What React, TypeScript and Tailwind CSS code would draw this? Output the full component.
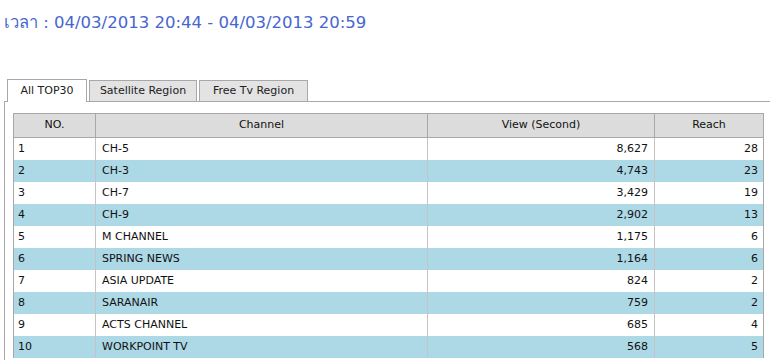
import React from "react";

const rows: [number, string, string, number][] = [
  [1, "CH-5", "8,627", 28],
  [2, "CH-3", "4,743", 23],
  [3, "CH-7", "3,429", 19],
  [4, "CH-9", "2,902", 13],
  [5, "M CHANNEL", "1,175", 6],
  [6, "SPRING NEWS", "1,164", 6],
  [7, "ASIA UPDATE", "824", 2],
  [8, "SARANAIR", "759", 2],
  [9, "ACTS CHANNEL", "685", 4],
  [10, "WORKPOINT TV", "568", 5],
];

export default function App() {
  return (
    <div
      className="w-[770px] h-[360px] overflow-hidden bg-white"
      style={{ fontFamily: '"DejaVu Sans", "Noto Sans", sans-serif' }}
    >
      <div className="pl-[4px] pt-[11px] h-[80px] text-[16.5px] leading-[24px] text-[#4766d0]">
        เวลา : 04/03/2013 20:44 - 04/03/2013 20:59
      </div>
      <div className="pl-[4px]">
        <div className="flex items-end pl-[3px] h-[22px] border-b border-[#a8a8a8] text-[11px] text-[#222]">
          <div className="w-[80px] h-[23px] -mb-px bg-white border border-b-0 border-[#a8a8a8] flex items-center justify-center">
            All TOP30
          </div>
          <div className="ml-[2px] w-[108px] h-[21px] bg-[#e3e3e3] border border-b-0 border-[#a8a8a8] flex items-center justify-center">
            Satellite Region
          </div>
          <div className="ml-[2px] w-[109px] h-[21px] bg-[#e3e3e3] border border-b-0 border-[#a8a8a8] flex items-center justify-center">
            Free Tv Region
          </div>
        </div>
        <div className="border-l border-[#a8a8a8] pl-[8px] pt-[11px] h-[300px]">
          <div className="w-[751px] border-t border-l border-r border-[#a8a8a8] text-[11px] text-[#111]">
            <div className="flex h-[24px] bg-[#dcdcdc] border-b border-[#a8a8a8]">
              <div className="w-[82px] flex items-center justify-center border-r border-[#a8a8a8]">NO.</div>
              <div className="w-[332px] flex items-center justify-center border-r border-[#a8a8a8]">Channel</div>
              <div className="w-[227px] flex items-center justify-center border-r border-[#a8a8a8]">View (Second)</div>
              <div className="flex-1 flex items-center justify-center">Reach</div>
            </div>
            {rows.map(([n, ch, v, r]) => (
              <div
                key={n}
                className={`flex h-[22px] ${n % 2 === 0 ? "bg-[#add8e6]" : "bg-white"}`}
              >
                <div className="w-[82px] flex items-center pl-[4px] border-r border-[#c4c4c4]">{n}</div>
                <div className="w-[332px] flex items-center pl-[6px] border-r border-[#c4c4c4]">{ch}</div>
                <div className="w-[227px] flex items-center justify-end pr-[6px] border-r border-[#c4c4c4]">{v}</div>
                <div className="flex-1 flex items-center justify-end pr-[5px]">{r}</div>
              </div>
            ))}
          </div>
        </div>
      </div>
    </div>
  );
}
